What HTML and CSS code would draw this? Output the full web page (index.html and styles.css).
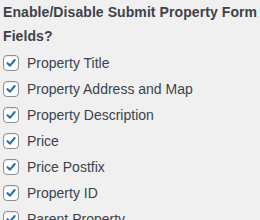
FILE: index.html
```
<!DOCTYPE html>
<html>
<head>
<meta charset="utf-8">
<link rel="stylesheet" href="styles.css">
</head>
<body>
<div class="wrap">
  <h2 class="title">Enable/Disable Submit Property Form Fields?</h2>
  <ul class="fields">
    <li class="field"><span class="box"><svg viewBox="0 0 16 16" width="16" height="16"><path d="M4 8.2 L6.9 11 L12.2 4.6" /></svg></span><span class="label">Property Title</span></li>
    <li class="field"><span class="box"><svg viewBox="0 0 16 16" width="16" height="16"><path d="M4 8.2 L6.9 11 L12.2 4.6" /></svg></span><span class="label">Property Address and Map</span></li>
    <li class="field"><span class="box"><svg viewBox="0 0 16 16" width="16" height="16"><path d="M4 8.2 L6.9 11 L12.2 4.6" /></svg></span><span class="label">Property Description</span></li>
    <li class="field"><span class="box"><svg viewBox="0 0 16 16" width="16" height="16"><path d="M4 8.2 L6.9 11 L12.2 4.6" /></svg></span><span class="label">Price</span></li>
    <li class="field"><span class="box"><svg viewBox="0 0 16 16" width="16" height="16"><path d="M4 8.2 L6.9 11 L12.2 4.6" /></svg></span><span class="label">Price Postfix</span></li>
    <li class="field"><span class="box"><svg viewBox="0 0 16 16" width="16" height="16"><path d="M4 8.2 L6.9 11 L12.2 4.6" /></svg></span><span class="label">Property ID</span></li>
    <li class="field"><span class="box"><svg viewBox="0 0 16 16" width="16" height="16"><path d="M4 8.2 L6.9 11 L12.2 4.6" /></svg></span><span class="label">Parent Property</span></li>
  </ul>
</div>
</body>
</html>
```
FILE: styles.css
```
html, body {
  margin: 0;
  padding: 0;
  background: #f0f0f1;
}
.wrap {
  padding: 0 0 0 3px;
  font-family: "Liberation Sans", Arial, sans-serif;
  color: #3c434a;
}
.title {
  margin: 0;
  font-size: 14px;
  font-weight: 700;
  line-height: 24px;
  letter-spacing: 0.08px;
  color: #3c434a;
  width: 256px;
}
.fields {
  list-style: none;
  margin: 2px 0 0 0;
  padding: 0;
}
.field {
  display: flex;
  align-items: center;
  height: 26px;
  gap: 8px;
}
.box {
  box-sizing: border-box;
  width: 16px;
  height: 16px;
  border: 1px solid #8c8f94;
  border-radius: 4px;
  background: #fff;
  box-shadow: inset 0 1px 2px rgba(0, 0, 0, 0.1);
  display: flex;
  align-items: center;
  justify-content: center;
  flex: none;
}
.box svg {
  display: block;
  fill: none;
  stroke: #2271b1;
  stroke-width: 2.4;
  stroke-linecap: round;
  stroke-linejoin: round;
}
.label {
  font-size: 14px;
  line-height: 20px;
}
```
